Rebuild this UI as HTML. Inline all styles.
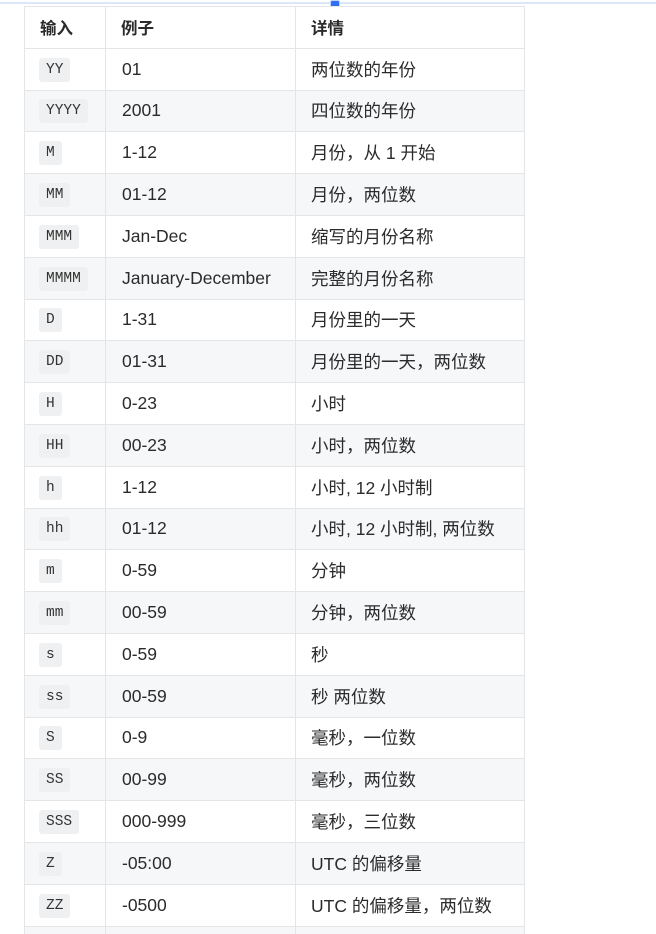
<!DOCTYPE html>
<html><head><meta charset="utf-8"><style>
html,body{margin:0;padding:0;background:#fff;width:656px;height:934px;overflow:hidden;position:relative}
.topline{position:absolute;left:0;right:0;top:2px;height:2px;background:#dce6fb}
.handle{position:absolute;left:330px;top:0;width:10px;height:10px;background:#2f6ff5;border:1px solid #bcd0fb;border-radius:2px;box-sizing:border-box}
table{position:absolute;left:24px;top:6px;border-collapse:collapse;table-layout:fixed;width:500px;font-family:"Liberation Sans","Noto Sans CJK SC",sans-serif;font-size:17.5px;color:#2b2b2b}
td,th{border:1px solid #e4e5e7;height:41.8px;padding:0 0 0 15px;text-align:left;box-sizing:border-box;vertical-align:middle;white-space:nowrap}
th{font-weight:bold;font-size:16.5px}
tr:nth-child(odd) td{background:#f6f7f9}
tr:first-child th{background:#fff}
col.a{width:81px}col.b{width:190px}col.c{width:229px}
td:nth-child(1){padding-left:14px}
td:nth-child(2){padding-left:16px}
code{font-family:"Liberation Mono","DejaVu Sans Mono",monospace;font-size:14.5px;background:#eff0f1;border-radius:3px;padding:4px 7px;color:#333;display:inline-block;line-height:16px}
</style></head><body>
<div class="topline"></div><div class="handle"></div>
<table><colgroup><col class="a"><col class="b"><col class="c"></colgroup>
<tr><th>输入</th><th>例子</th><th>详情</th></tr>
<tr><td><code>YY</code></td><td>01</td><td>两位数的年份</td></tr>
<tr><td><code>YYYY</code></td><td>2001</td><td>四位数的年份</td></tr>
<tr><td><code>M</code></td><td>1-12</td><td>月份，从 1 开始</td></tr>
<tr><td><code>MM</code></td><td>01-12</td><td>月份，两位数</td></tr>
<tr><td><code>MMM</code></td><td>Jan-Dec</td><td>缩写的月份名称</td></tr>
<tr><td><code>MMMM</code></td><td>January-December</td><td>完整的月份名称</td></tr>
<tr><td><code>D</code></td><td>1-31</td><td>月份里的一天</td></tr>
<tr><td><code>DD</code></td><td>01-31</td><td>月份里的一天，两位数</td></tr>
<tr><td><code>H</code></td><td>0-23</td><td>小时</td></tr>
<tr><td><code>HH</code></td><td>00-23</td><td>小时，两位数</td></tr>
<tr><td><code>h</code></td><td>1-12</td><td>小时, 12 小时制</td></tr>
<tr><td><code>hh</code></td><td>01-12</td><td>小时, 12 小时制, 两位数</td></tr>
<tr><td><code>m</code></td><td>0-59</td><td>分钟</td></tr>
<tr><td><code>mm</code></td><td>00-59</td><td>分钟，两位数</td></tr>
<tr><td><code>s</code></td><td>0-59</td><td>秒</td></tr>
<tr><td><code>ss</code></td><td>00-59</td><td>秒 两位数</td></tr>
<tr><td><code>S</code></td><td>0-9</td><td>毫秒，一位数</td></tr>
<tr><td><code>SS</code></td><td>00-99</td><td>毫秒，两位数</td></tr>
<tr><td><code>SSS</code></td><td>000-999</td><td>毫秒，三位数</td></tr>
<tr><td><code>Z</code></td><td>-05:00</td><td>UTC 的偏移量</td></tr>
<tr><td><code>ZZ</code></td><td>-0500</td><td>UTC 的偏移量，两位数</td></tr>
<tr><td></td><td></td><td></td></tr>
</table>
</body></html>
